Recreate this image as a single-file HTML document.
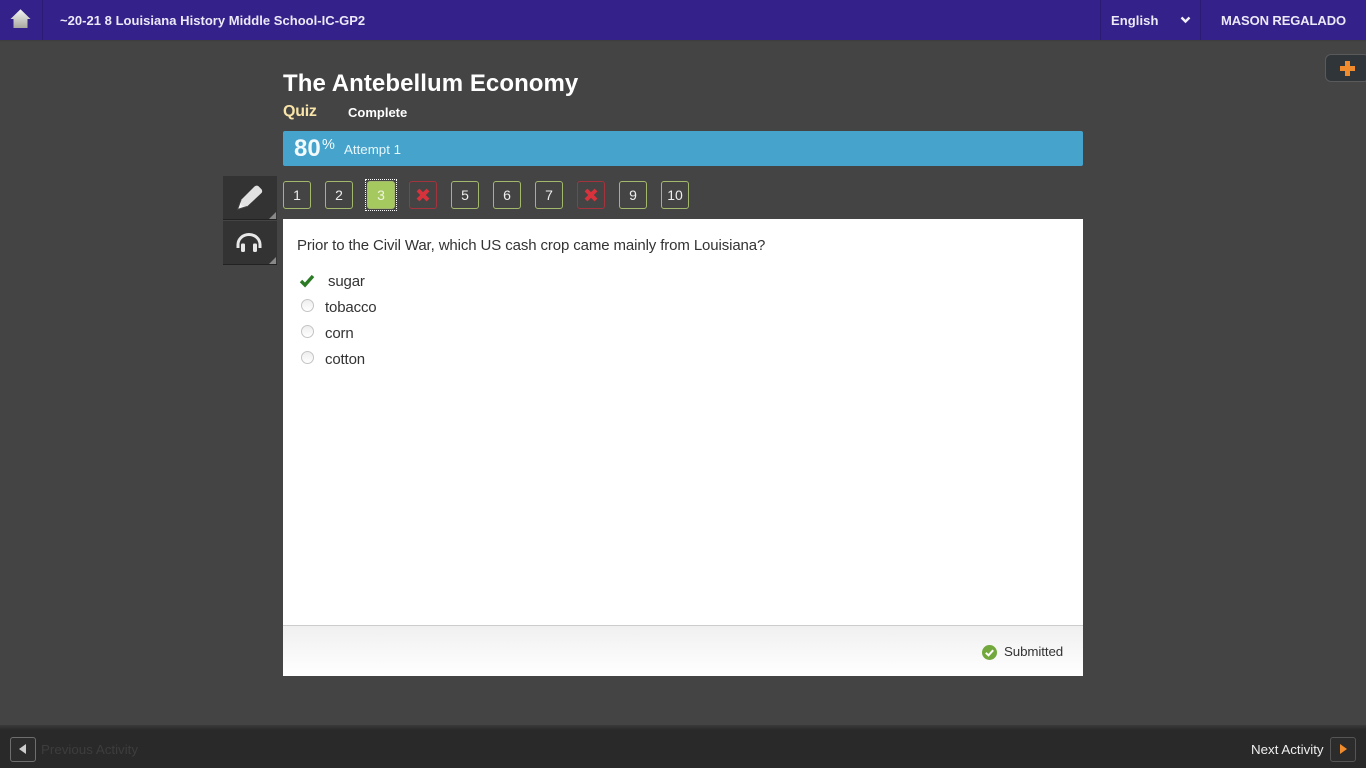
<!DOCTYPE html>
<html><head><meta charset="utf-8"><style>
*{box-sizing:border-box}
html,body{margin:0;padding:0;width:1366px;height:768px;overflow:hidden;background:#444;font-family:"Liberation Sans",sans-serif}
.a{position:absolute}
.t{position:absolute;white-space:nowrap}
.n{position:absolute;top:181px;width:28px;height:28px;border:1px solid #a3b86c;border-radius:3px;color:#eee;font-size:14px;line-height:27px;text-align:center}
.x{border-color:#a3333d}
.r{position:absolute;left:301px;width:13px;height:13px;border-radius:50%;border:1px solid #c4c4c4;background:linear-gradient(#eee,#fff)}
.o{position:absolute;font-size:15px;color:#333;line-height:18px;white-space:nowrap;letter-spacing:-.15px}
</style></head><body>
<div class="a" style="left:0;top:0;width:1366px;height:40px;background:#35218a"></div>
<div class="a" style="left:0;top:40px;width:1366px;height:2px;background:linear-gradient(#3c3c3c,#444)"></div>
<div class="a" style="left:42px;top:0;width:1px;height:40px;background:#2c1b75"></div>
<div class="a" style="left:1100px;top:0;width:1px;height:40px;background:#2c1b75"></div>
<div class="a" style="left:1200px;top:0;width:1px;height:40px;background:#2c1b75"></div>
<svg class="a" style="left:10px;top:9px" width="21" height="20" viewBox="0 0 21 20"><defs><linearGradient id="h" x1="0" y1="0" x2="0" y2="1"><stop offset="0" stop-color="#f6f6f6"/><stop offset="1" stop-color="#a9a9a0"/></linearGradient></defs><path d="M10.500 .3 20.500 10H17.500v9H3.500V10H.5z" fill="url(#h)"/></svg>
<div class="t" style="left:60px;top:13px;font-size:13px;font-weight:bold;color:#ece9f8;line-height:15px;letter-spacing:.03px">~20-21 8 Louisiana History Middle School-IC-GP2</div>
<div class="t" style="left:1111px;top:13px;font-size:13px;font-weight:bold;color:#ece9f8;line-height:15px;letter-spacing:.08px">English</div>
<svg class="a" style="left:1180px;top:15px" width="11" height="10" viewBox="0 0 11 10"><path d="M1.500 2.500 5.500 6.500 9.500 2.500" fill="none" stroke="#f2f0fb" stroke-width="2.400"/></svg>
<div class="t" style="left:1221px;top:13px;font-size:13px;font-weight:bold;color:#ece9f8;line-height:15px;letter-spacing:-.1px">MASON REGALADO</div>
<div class="a" style="left:1325px;top:54px;width:45px;height:28px;background:#30353a;border:1px solid #5a5a5a;border-radius:6px"></div>
<svg class="a" style="left:1339.500px;top:61px" width="15" height="15" viewBox="0 0 15 15"><path d="M5 0h5v5h5v5H10v5H5V10H0V5h5z" fill="#f08c2e"/></svg>
<div class="t" style="left:283px;top:70px;font-size:24px;font-weight:bold;color:#fff;line-height:28px;letter-spacing:.07px">The Antebellum Economy</div>
<div class="t" style="left:283px;top:103px;font-size:16px;font-weight:bold;color:#f8e4a8;line-height:18px;letter-spacing:-.25px">Quiz</div>
<div class="t" style="left:348px;top:105px;font-size:13px;font-weight:bold;color:#fff;line-height:15px">Complete</div>
<div class="a" style="left:283px;top:131px;width:800px;height:35px;background:#46a4cc;border-radius:2px"></div>
<div class="t" style="left:294px;top:135px;font-size:24px;font-weight:bold;color:#f2fafd;line-height:28px">80</div>
<div class="t" style="left:322px;top:138px;font-size:14.500px;color:#f2fafd;line-height:14px;letter-spacing:-.5px">%</div>
<div class="t" style="left:344px;top:142px;font-size:13.330px;color:#e8f6fb;line-height:15px">Attempt 1</div>
<div class="a" style="left:223px;top:176px;width:54px;height:44px;background:#333;border-bottom:1px solid #222"></div>
<div class="a" style="left:223px;top:221px;width:54px;height:44px;background:#333;border-bottom:1px solid #222"></div>
<div class="a" style="left:269px;top:212px;width:0;height:0;border-left:7px solid transparent;border-bottom:7px solid #888"></div>
<div class="a" style="left:269px;top:257px;width:0;height:0;border-left:7px solid transparent;border-bottom:7px solid #888"></div>
<svg class="a" style="left:236px;top:184px" width="28" height="28" viewBox="0 0 28 28"><path d="M18.500 2.500Q20.500 .8 22.500 2.300L25.500 5.300Q27 7.500 25.200 9.300L11 22.500 1.500 25.500 5 16z" fill="#e2e2e2"/><path d="M5 16 1.500 25.500 11 22.500" fill="none" stroke="#444" stroke-width="1"/><path d="M5 17.500 2.500 24.500 9.500 22 6.500 22 5 20z" fill="#f4f4f4"/></svg>
<svg class="a" style="left:236px;top:231px" width="26" height="24" viewBox="0 0 26 24"><path d="M2 17v-3.500a11 10 0 0 1 22 0V17" fill="none" stroke="#e8e8e8" stroke-width="3"/><rect x="5" y="12.500" width="4" height="8.500" rx="1.200" fill="#e8e8e8"/><rect x="17" y="12.500" width="4" height="8.500" rx="1.200" fill="#e8e8e8"/></svg>
<div class="n" style="left:283px">1</div>
<div class="n" style="left:325px">2</div>
<div class="a" style="left:365px;top:179px;width:32px;height:32px;border:1px dotted #fff"></div>
<div class="n" style="left:367px;background:#a5c85f;color:#eef5dc">3</div>
<div class="n x" style="left:409px"></div>
<div class="n" style="left:451px">5</div>
<div class="n" style="left:493px">6</div>
<div class="n" style="left:535px">7</div>
<div class="n x" style="left:577px"></div>
<div class="n" style="left:619px">9</div>
<div class="n" style="left:661px">10</div>
<svg class="a" style="left:416px;top:188px" width="14" height="14" viewBox="0 0 14 14"><path d="M2 2 12 12M12 2 2 12" stroke="#d8323c" stroke-width="4"/></svg>
<svg class="a" style="left:584px;top:188px" width="14" height="14" viewBox="0 0 14 14"><path d="M2 2 12 12M12 2 2 12" stroke="#d8323c" stroke-width="4"/></svg>
<div class="a" style="left:283px;top:219px;width:800px;height:457px;background:#fff"></div>
<div class="a" style="left:283px;top:625px;width:800px;height:51px;border-top:1px solid #ccc;background:linear-gradient(#f0f0f0,#fff)"></div>
<div class="t" style="left:297px;top:237px;font-size:15px;color:#333;line-height:18px;letter-spacing:-.115px">Prior to the Civil War, which US cash crop came mainly from Louisiana?</div>
<svg class="a" style="left:299px;top:274px" width="16" height="14" viewBox="0 0 16 14"><path d="M2 7 6 11 14 2" fill="none" stroke="#2b7a24" stroke-width="3.400"/></svg>
<div class="o" style="left:328px;top:273px">sugar</div>
<div class="r" style="top:299px"></div><div class="o" style="left:325px;top:299px">tobacco</div>
<div class="r" style="top:325px"></div><div class="o" style="left:325px;top:325px">corn</div>
<div class="r" style="top:351px"></div><div class="o" style="left:325px;top:351px">cotton</div>
<svg class="a" style="left:982px;top:645px" width="15" height="15" viewBox="0 0 15 15"><circle cx="7.500" cy="7.500" r="7.500" fill="#72a83c"/><path d="M3.800 7.800 6.500 10.300 11.200 5.200" fill="none" stroke="#fff" stroke-width="2"/></svg>
<div class="t" style="left:1004px;top:644px;font-size:13.330px;color:#333;line-height:15px;letter-spacing:-.1px">Submitted</div>
<div class="a" style="left:0;top:725px;width:1366px;height:43px;background:linear-gradient(#3a3a3a 0,#292929 5px,#292929 100%)"></div>
<div class="a" style="left:10px;top:737px;width:26px;height:25px;border:1px solid #6e6e6e;border-radius:3px;background:#2c2c2c"></div>
<div class="a" style="left:19px;top:744px;width:0;height:0;border-top:5px solid transparent;border-bottom:5px solid transparent;border-right:7px solid #ccc"></div>
<div class="t" style="left:41px;top:742px;font-size:13.330px;color:#3d3d3d;line-height:15px">Previous Activity</div>
<div class="t" style="left:1251px;top:742px;font-size:13.330px;color:#eee;line-height:15px">Next Activity</div>
<div class="a" style="left:1330px;top:737px;width:26px;height:25px;border:1px solid #555;border-radius:3px;background:#2c2c2c"></div>
<div class="a" style="left:1340px;top:744px;width:0;height:0;border-top:5px solid transparent;border-bottom:5px solid transparent;border-left:7px solid #f08c2e"></div>
</body></html>
